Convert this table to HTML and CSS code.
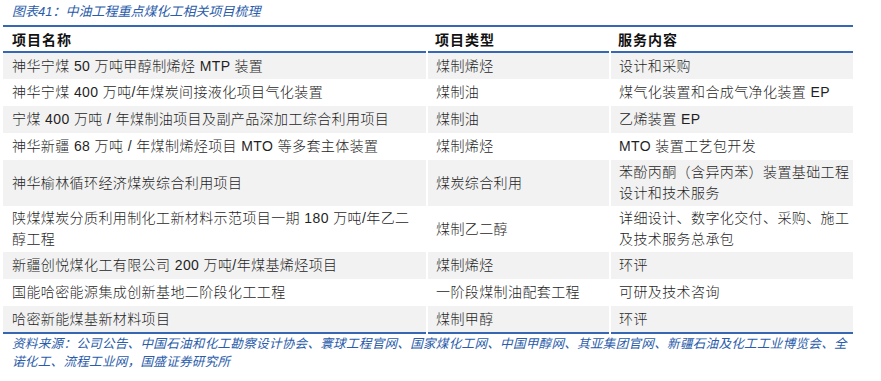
FILE: index.html
```html
<!DOCTYPE html>
<html lang="zh-CN">
<head>
<meta charset="utf-8">
<title>中油工程重点煤化工相关项目梳理</title>
<link rel="stylesheet" href="styles.css">
</head>
<body>
<div class="page">
  <div class="caption">图表41：中油工程重点煤化工相关项目梳理</div>
  <table class="tbl">
    <colgroup>
      <col class="c1"><col class="c2"><col class="c3">
    </colgroup>
    <thead>
      <tr class="head"><th>项目名称</th><th>项目类型</th><th>服务内容</th></tr>
    </thead>
    <tbody>
      <tr class="row odd"><td>神华宁煤 50 万吨甲醇制烯烃 MTP 装置</td><td>煤制烯烃</td><td>设计和采购</td></tr>
      <tr class="row"><td>神华宁煤 400 万吨/年煤炭间接液化项目气化装置</td><td>煤制油</td><td>煤气化装置和合成气净化装置 EP</td></tr>
      <tr class="row odd"><td>宁煤 400 万吨 / 年煤制油项目及副产品深加工综合利用项目</td><td>煤制油</td><td>乙烯装置 EP</td></tr>
      <tr class="row"><td>神华新疆 68 万吨 / 年煤制烯烃项目 MTO 等多套主体装置</td><td>煤制烯烃</td><td>MTO 装置工艺包开发</td></tr>
      <tr class="row odd"><td>神华榆林循环经济煤炭综合利用项目</td><td>煤炭综合利用</td><td>苯酚丙酮（含异丙苯）装置基础工程<br>设计和技术服务</td></tr>
      <tr class="row"><td>陕煤煤炭分质利用制化工新材料示范项目一期 180 万吨/年乙二<br>醇工程</td><td>煤制乙二醇</td><td>详细设计、数字化交付、采购、施工<br>及技术服务总承包</td></tr>
      <tr class="row odd"><td>新疆创悦煤化工有限公司 200 万吨/年煤基烯烃项目</td><td>煤制烯烃</td><td>环评</td></tr>
      <tr class="row"><td>国能哈密能源集成创新基地二阶段化工工程</td><td>一阶段煤制油配套工程</td><td>可研及技术咨询</td></tr>
      <tr class="row odd"><td>哈密新能煤基新材料项目</td><td>煤制甲醇</td><td>环评</td></tr>
    </tbody>
  </table>
  <div class="source">资料来源：公司公告、中国石油和化工勘察设计协会、寰球工程官网、国家煤化工网、中国甲醇网、其亚集团官网、新疆石油及化工工业博览会、全<br>诺化工、流程工业网，国盛证券研究所</div>
</div>
</body>
</html>
```

FILE: styles.css
```css
html, body {
  margin: 0;
  padding: 0;
  background: #ffffff;
}

.page {
  padding: 0 0 0 3px;
  width: 850px;
  font-family: "Liberation Sans", "Noto Sans CJK SC", sans-serif;
}

.caption {
  height: 25px;
  line-height: 24px;
  padding-left: 9px;
  font-size: 13px;
  font-style: italic;
  color: #2a5caa;
}

.tbl {
  width: 850px;
  border-collapse: collapse;
  table-layout: fixed;
  border-top: 2px solid #3567b3;
  border-bottom: 2px solid #3567b3;
  font-size: 14px;
  color: #1a1a1a;
}

.c1 { width: 424px; }
.c2 { width: 183px; }
.c3 { width: 243px; }

.head {
  height: 26px;
  border-bottom: 2px solid #3567b3;
}

.head th {
  text-align: left;
  font-weight: bold;
  padding: 0 0 0 8px;
  letter-spacing: 1px;
  color: #111;
}

.head th:first-child { padding-left: 9px; }

.row { height: 27px; }

.row td {
  padding: 2px 0 2px 8px;
  line-height: 21px;
  vertical-align: middle;
  letter-spacing: 0.4px;
  font-weight: 300;
  color: #1f1f1f;
  border-right: 2px solid #ffffff;
}

.row td:first-child { padding-left: 9px; }
.row td:last-child { border-right: none; }

.odd { background: #f2f2f2; }

.source {
  padding: 1px 0 0 9px;
  font-size: 12.6px;
  line-height: 18px;
  font-style: italic;
  color: #2a5caa;
  letter-spacing: 0.25px;
  white-space: nowrap;
}
```
